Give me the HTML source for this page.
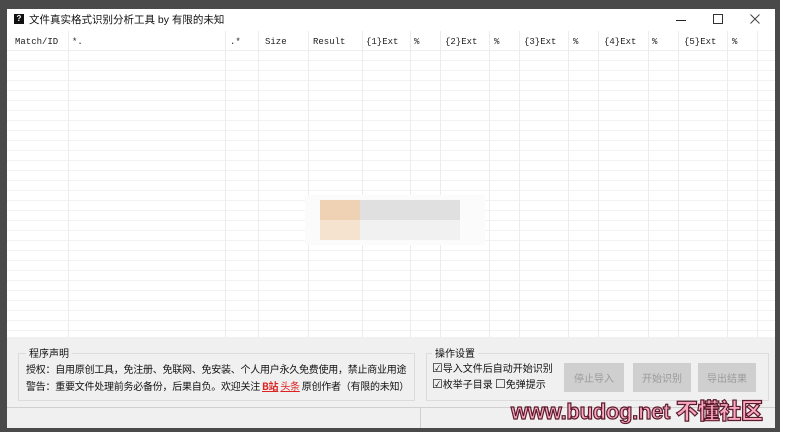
<!DOCTYPE html><html><head><meta charset="utf-8"><style>
body{margin:0;width:787px;height:434px;background:#fff;position:relative;overflow:hidden;font-family:"Liberation Sans","Noto Sans CJK SC",sans-serif}
.a{position:absolute}
.cj{font-family:"Noto Sans CJK SC",sans-serif}
.mono{font-family:"Liberation Mono","Noto Sans CJK SC",monospace;font-size:9px;color:#222}
.vl{position:absolute;top:31px;height:306px;width:1px;background:#ececec}
.btn{position:absolute;top:363px;height:29px;background:#cfcfcf;color:#9a9a9a;font-size:10px;text-align:center;line-height:29px}
</style></head><body>
<div class="a" style="left:0;top:0;width:780px;height:432px;background:#4a4a4a"></div>
<div class="a" style="left:7px;top:9px;width:768px;height:419px;background:#fff"></div>
<div class="a" style="left:14px;top:14px;width:10px;height:10px;background:#111;color:#fff;font-size:8px;text-align:center;line-height:10px;font-weight:bold">?</div>
<div class="a" style="left:29px;top:12px;font-size:10.5px;color:#111">文件真实格式识别分析工具 by 有限的未知</div>
<div class="a" style="left:676px;top:20px;width:10px;height:1px;background:#222"></div>
<div class="a" style="left:713px;top:14px;width:8px;height:8px;border:1px solid #333"></div>
<svg class="a" style="left:750px;top:14px" width="10" height="10"><path d="M0.5 0.5L9.5 9.5M9.5 0.5L0.5 9.5" stroke="#444" stroke-width="1"/></svg>
<div class="a" style="left:7px;top:31px;width:768px;height:306px;background:repeating-linear-gradient(#fff 0 9px,#f2f2f2 9px 10px)"></div>
<div class="a" style="left:7px;top:31px;width:768px;height:19px;background:#fff;border-bottom:1px solid #eee"></div>
<div class="vl" style="left:68px"></div><div class="vl" style="left:225px"></div><div class="vl" style="left:258px"></div><div class="vl" style="left:308px"></div><div class="vl" style="left:362px"></div><div class="vl" style="left:410px"></div><div class="vl" style="left:440px"></div><div class="vl" style="left:489px"></div><div class="vl" style="left:519px"></div><div class="vl" style="left:568px"></div><div class="vl" style="left:598px"></div><div class="vl" style="left:648px"></div><div class="vl" style="left:678px"></div><div class="vl" style="left:727px"></div><div class="vl" style="left:757px"></div>
<div class="mono">
<span class="a" style="left:15px;top:37px">Match/ID</span><span class="a" style="left:72px;top:37px">*.</span><span class="a" style="left:230px;top:37px">.*</span><span class="a" style="left:265px;top:37px">Size</span><span class="a" style="left:313px;top:37px">Result</span><span class="a" style="left:366px;top:37px">{1}Ext</span><span class="a" style="left:414px;top:37px">%</span><span class="a" style="left:445px;top:37px">{2}Ext</span><span class="a" style="left:494px;top:37px">%</span><span class="a" style="left:524px;top:37px">{3}Ext</span><span class="a" style="left:573px;top:37px">%</span><span class="a" style="left:604px;top:37px">{4}Ext</span><span class="a" style="left:652px;top:37px">%</span><span class="a" style="left:684px;top:37px">{5}Ext</span><span class="a" style="left:732px;top:37px">%</span>
</div>
<div class="a" style="left:305px;top:195px;width:180px;height:50px;background:#fbfbfb"></div>
<div class="a" style="left:320px;top:200px;width:40px;height:20px;background:#efd2b3"></div>
<div class="a" style="left:320px;top:220px;width:40px;height:20px;background:#f5e2cf"></div>
<div class="a" style="left:360px;top:200px;width:100px;height:20px;background:#e0e0e0"></div>
<div class="a" style="left:360px;top:220px;width:100px;height:20px;background:#f1f1f1"></div>
<div class="a" style="left:7px;top:337px;width:768px;height:91px;background:#f0f0f0"></div>
<div class="a" style="left:18px;top:353px;width:395px;height:46px;border:1px solid #dcdcdc"></div>
<div class="a cj" style="left:26px;top:345px;font-size:10px;background:#f0f0f0;padding:0 3px;color:#111">程序声明</div>
<div class="a cj" style="left:26px;top:360px;font-size:10px;color:#111;line-height:17px;white-space:nowrap;letter-spacing:-0.25px">授权：自用原创工具，免注册、免联网、免安装、个人用户永久免费使用，禁止商业用途<br>警告：重要文件处理前务必备份，后果自负。欢迎关注 <span style="color:#d22;text-decoration:underline;font-weight:bold">B站</span> <span style="color:#d22;text-decoration:underline">头条</span> 原创作者（有限的未知）</div>
<div class="a" style="left:426px;top:353px;width:341px;height:46px;border:1px solid #dcdcdc"></div>
<div class="a cj" style="left:432px;top:345px;font-size:10px;background:#f0f0f0;padding:0 3px;color:#111">操作设置</div>
<div class="a cj" style="left:432px;top:360px;font-size:10px;color:#111;line-height:16px;white-space:nowrap"><span style="font-size:12px">☑</span>导入文件后自动开始识别<br><span style="font-size:12px">☑</span>枚举子目录 <span style="font-size:12px">☐</span>免弹提示</div>
<div class="btn cj" style="left:564px;width:60px">停止导入</div>
<div class="btn cj" style="left:633px;width:58px">开始识别</div>
<div class="btn cj" style="left:698px;width:58px">导出结果</div>
<div class="a" style="left:7px;top:407px;width:768px;height:1px;background:#d0d0d0"></div>
<div class="a" style="left:420px;top:408px;width:1px;height:20px;background:#d0d0d0"></div>
<div class="a" style="left:511px;top:394px;font-family:'Liberation Sans','Noto Sans CJK SC',sans-serif;font-weight:900;font-size:22px;color:#f8a8c0;-webkit-text-stroke:1.2px #5a1a2a;letter-spacing:-0.3px;white-space:nowrap">www.budog.net 不懂社区</div>
</body></html>
